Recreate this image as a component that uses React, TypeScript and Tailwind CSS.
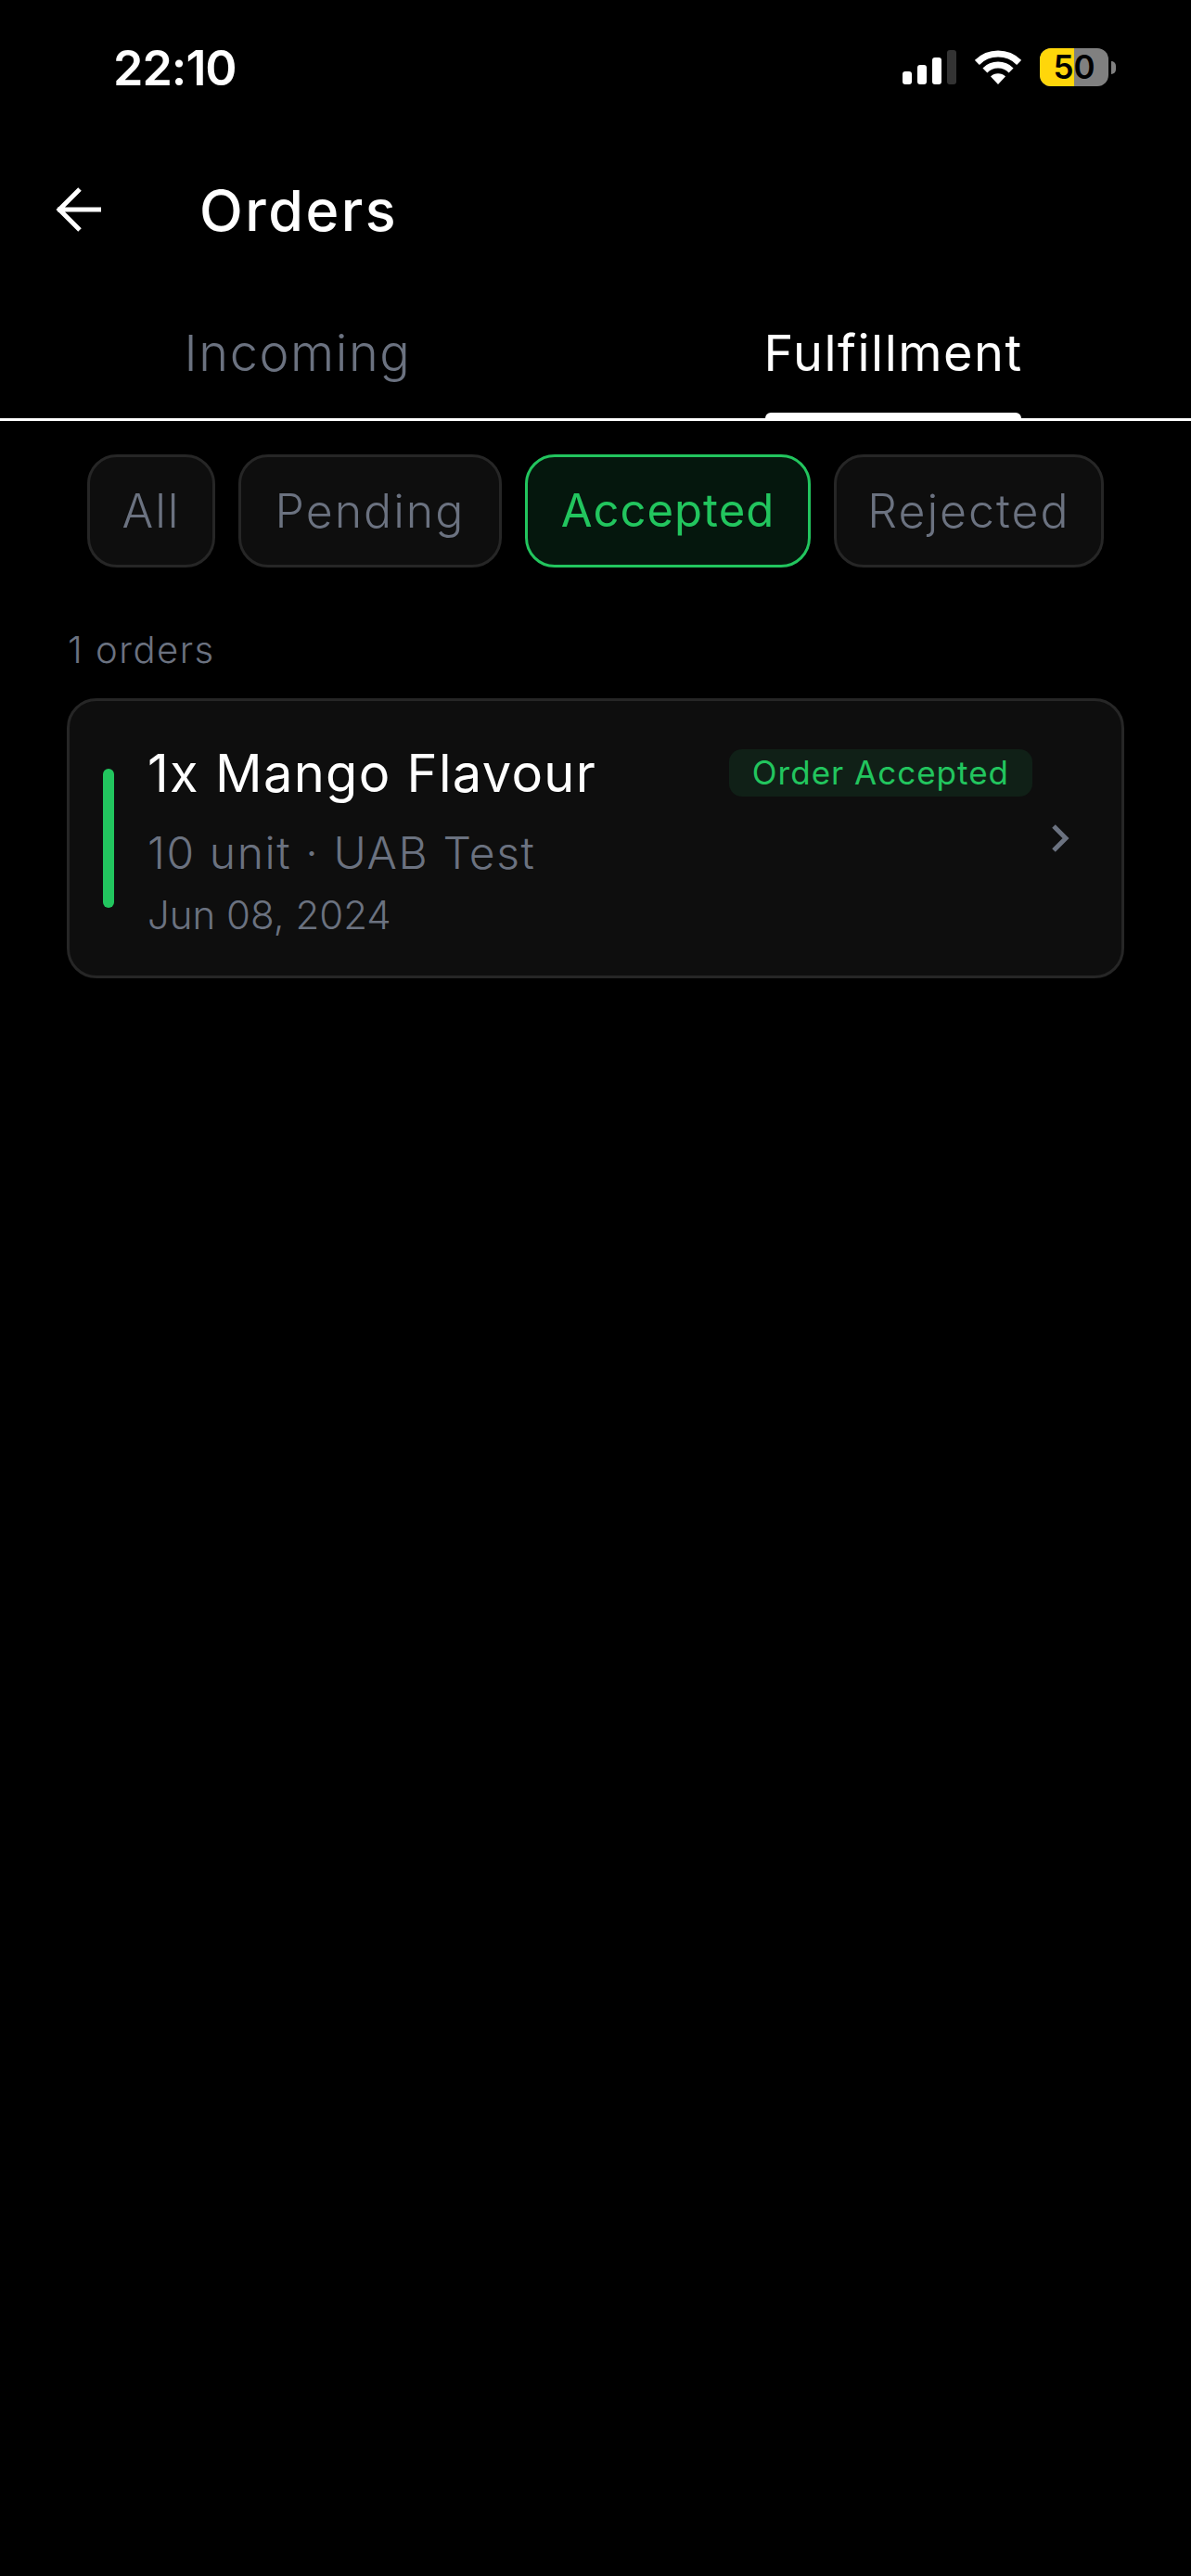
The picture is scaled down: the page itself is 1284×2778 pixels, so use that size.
const filters = [
  { label: "All", width: "w-[138px]" },
  { label: "Pending", width: "w-[284px]" },
  { label: "Accepted", width: "w-[308px]", active: true },
  { label: "Rejected", width: "w-[291px]" },
]

const StatusBar = () => {
  return (
    <div className="flex justify-between items-start h-[146px] pt-[46px] pl-[122px] pr-[81px]">
      <span className="text-[52px] leading-[56px] font-semibold text-white tracking-[-1px] font-['Inter',sans-serif]">22:10</span>
      <div className="flex items-start">
        <div className="flex items-end gap-[6px] h-[37px] mt-[8px]">
          <div className="w-[10px] h-[14px] rounded-[3px] bg-white" />
          <div className="w-[10px] h-[21px] rounded-[3px] bg-white" />
          <div className="w-[10px] h-[29px] rounded-[3px] bg-white" />
          <div className="w-[10px] h-[37px] rounded-[3px] bg-[#333333]" />
        </div>
        <svg width="50" height="37" viewBox="0 0 50 37" className="ml-[20px] mt-[8px]" fill="none">
          <path d="M2.4 13.4 A32 32 0 0 1 47.6 13.4" stroke="#fff" strokeWidth="7" />
          <path d="M10.9 21.9 A20 20 0 0 1 39.1 21.9" stroke="#fff" strokeWidth="7" />
          <path d="M25 37 L17 28.5 A11.5 11.5 0 0 1 33 28.5 Z" fill="#fff" />
        </svg>
        <div className="flex items-center ml-[20px] mt-[6px]">
          <div className="relative w-[74px] h-[41px] rounded-[12px] overflow-hidden bg-[#808080]">
            <div className="w-[37px] h-full bg-[#ffd60a]" />
            <span className="absolute inset-0 flex items-center justify-center text-[35px] font-semibold text-black font-['Inter',sans-serif]">50</span>
          </div>
          <div className="w-[5px] h-[14px] ml-[3px] rounded-r-full bg-[#808080]" />
        </div>
      </div>
    </div>
  )
}

const App = () => {
  return (
    <div className="w-[1284px] h-[2778px] overflow-hidden bg-black font-['Inter',sans-serif]">
      <StatusBar />
      <div className="flex items-center h-[160px] pl-[60px]">
        <svg width="50" height="50" viewBox="0 0 50 50" fill="none" stroke="#fff" strokeWidth="5" className="mr-[105px]">
          <path d="M2 25 H49 M26 3 L4 25 L26 47" />
        </svg>
        <h1 className="text-[61px] leading-[64px] font-medium text-white tracking-[2.5px] mt-[2px]">Orders</h1>
      </div>
      <div className="grid grid-cols-2 border-b-[3px] border-white -mt-[1px]">
        <div className="flex justify-center h-[146px] pt-[46px]">
          <span className="text-[54px] leading-[60px] font-light text-[#6b7280] tracking-[1.6px]">Incoming</span>
        </div>
        <div className="flex flex-col items-center justify-between h-[146px] pt-[46px]">
          <span className="text-[54px] leading-[60px] font-normal text-white tracking-[1.5px]">Fulfillment</span>
          <div className="w-[276px] h-[6px] rounded-t-[8px] bg-white" />
        </div>
      </div>
      <div className="flex justify-center gap-[25px] mt-[36px]">
        {filters.map((f) => (
          <div
            key={f.label}
            className={
              f.active
                ? `${f.width} h-[122px] flex items-center justify-center rounded-[32px] border-[3px] border-[#22c55e] bg-[#05170d] text-[#22c55e] text-[49px] tracking-[1px]`
                : `${f.width} h-[122px] flex items-center justify-center rounded-[32px] border-[3px] border-[#262626] bg-[#0e0e0e] text-[#6b7280] text-[50px] font-light tracking-[2px]`
            }
          >
            {f.label}
          </div>
        ))}
      </div>
      <p className="mt-[64px] ml-[73px] text-[40px] leading-[50px] font-light text-[#6b7280] tracking-[1.5px]">1 orders</p>
      <div className="flex items-center mx-[72px] mt-[27px] h-[302px] rounded-[32px] border-[3px] border-[#262626] bg-[#0e0e0e] pl-[36px] pr-[56px]">
        <div className="w-[12px] h-[150px] rounded-full bg-[#22c55e]" />
        <div className="flex-1 ml-[36px] pt-[6px]">
          <div className="flex items-start justify-between pr-[20px]">
            <h2 className="text-[56px] leading-[64px] text-white tracking-[1.3px]">1x Mango Flavour</h2>
            <span className="mt-[6px] px-[25px] h-[51px] flex items-center rounded-[14px] bg-[#102017] text-[35px] text-[#22c55e] tracking-[1px]">Order Accepted</span>
          </div>
          <p className="mt-[24px] text-[48px] leading-[60px] font-light text-[#6b7280] tracking-[1.6px]">10 unit · UAB Test</p>
          <p className="mt-[12px] text-[42px] leading-[50px] font-light text-[#6b7280]">Jun 08, 2024</p>
        </div>
        <svg width="20" height="30" viewBox="0 0 20 30" fill="none" stroke="#6b7280" strokeWidth="5">
          <path d="M3 2 L16 15 L3 28" />
        </svg>
      </div>
    </div>
  )
}

export default App
